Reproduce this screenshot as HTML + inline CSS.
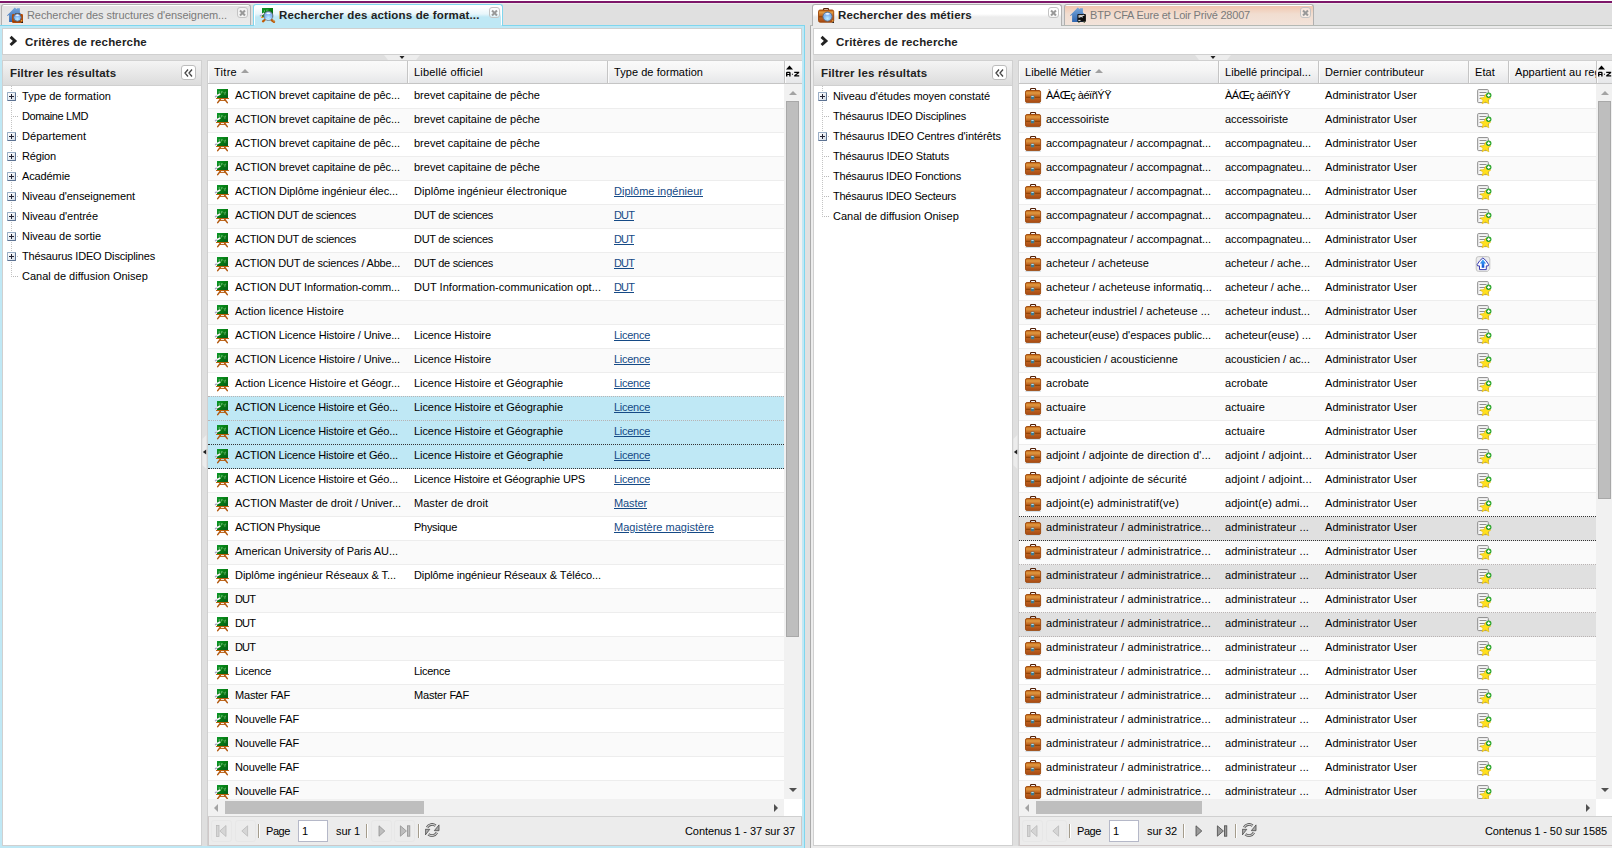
<!DOCTYPE html>
<html lang="fr"><head><meta charset="utf-8"><title>Recherche</title>
<style>
html,body{margin:0;padding:0}
body{width:1612px;height:848px;overflow:hidden;position:relative;background:#e0e0e0;font-family:"Liberation Sans",sans-serif;font-size:11px;color:#000}
.a{position:absolute;box-sizing:border-box}
.ic{position:absolute;display:block;overflow:visible}
.purple{left:0;top:0;width:1612px;height:4px;background:linear-gradient(#fff 0,#fff 1px,#7d1769 1px,#7d1769 3px,#ececec 3px)}
/* tabs */
.tab{border:1px solid #b0b0b0;border-bottom:0;border-radius:3px 3px 0 0}
.tab .tt{position:absolute;top:0;line-height:21px;white-space:nowrap;font-size:11px;color:#7a7a7a}
.tab .tt.b{font-weight:bold;font-size:11.5px;color:#222;letter-spacing:.16px}
.tab-in{background:linear-gradient(#fff 0,#fff 1px,#e4e4e4 1px,#ebebeb 100%)}
.tab-act{border-color:#7fd6ee;background:linear-gradient(#fff 0,#fff 2px,#e8f6fb 9px,#bfe8f5 12px,#bfe8f5 100%);box-shadow:inset 1px 0 0 #fff,inset -1px 0 0 #fff}
.tab-w{border-color:#b0b0b0;background:linear-gradient(#fff 0,#fff 9px,#ececec 12px,#ececec 100%)}
.tab-or{background:linear-gradient(#fff 0,#fff 1px,#f1c7ae 1px,#f1ddd0 9px,#f2e3da 100%)}
.cl{position:absolute;top:2px;width:11px;height:11px;box-sizing:border-box;border:1px solid #c4c4c4;border-radius:3px;background:rgba(255,255,255,.45)}
.cl:before,.cl:after{content:"";position:absolute;left:1px;top:3.5px;width:7px;height:2px;background:#999;transform:rotate(45deg)}
.cl:after{transform:rotate(-45deg)}
/* criteres */
.crit{background:#fff;border:1px solid #d0d0d0}
.ct{position:absolute;left:22px;top:1px;line-height:25px;font-weight:bold;font-size:11.5px;color:#222;white-space:nowrap;letter-spacing:.175px}
/* filter panel */
.fpanel{background:#fff;border:1px solid #d0d0d0}
.fhead{position:relative;height:25px;background:linear-gradient(#f4f4f4,#dcdcdc);border-bottom:1px solid #d0d0d0;box-sizing:border-box}
.ft{position:absolute;left:7px;top:0;line-height:24px;font-weight:bold;font-size:11.5px;color:#222;white-space:nowrap;letter-spacing:.16px}
.coll{position:absolute;right:5px;top:4px;width:15px;height:15px;box-sizing:border-box;border:1px solid #bdbdbd;border-radius:3px;background:#fff}
.coll svg{position:absolute;left:2px;top:2.5px}
.tree{position:relative;padding-top:1px}
.tn{position:relative;height:20px}
.tn.tp{background:linear-gradient(#bcbcbc,#bcbcbc) 14px 9px/1px 1px no-repeat}
.tl{position:absolute;left:19px;top:0;line-height:19px;white-space:nowrap}
.plus{position:absolute;left:4px;top:5px;width:9px;height:9px;box-sizing:border-box;border:1px solid;border-color:#9aaec6 #5c7292 #5c7292 #9aaec6;border-radius:1px;background:linear-gradient(135deg,#fff,#d4dce6)}
.plus:before{content:"";position:absolute;left:1px;top:3px;width:5px;height:1px;background:#223}
.plus:after{content:"";position:absolute;left:3px;top:1px;width:1px;height:5px;background:#223}
.hdot{position:absolute;left:10px;top:9px;width:5px;height:1px;background:repeating-linear-gradient(90deg,#b8b8b8 0,#b8b8b8 1px,transparent 1px,transparent 2px)}
.vdot{position:absolute;left:8px;top:0;width:1px;background:repeating-linear-gradient(#c4c4c4 0,#c4c4c4 1px,transparent 1px,transparent 2px)}
/* grid */
.grid{background:#fff;overflow:hidden}
.ghead{position:absolute;left:0;top:0;right:0;height:24px;box-sizing:border-box;border-top:1px solid #d0d0d0;border-bottom:1px solid #c5c5c5;background:linear-gradient(#fafafa,#f4f4f4 45%,#e6e7e9)}
.hc{position:absolute;top:0;height:22px;box-sizing:border-box;border-right:1px solid #c5c5c5;border-left:1px solid #fbfbfb;overflow:hidden;white-space:nowrap}
.hc span{position:absolute;left:5px;top:0;line-height:22px}
.hc span i{display:inline-block;margin-left:4px;vertical-align:3px;width:0;height:0;border:4px solid transparent;border-top:0;border-bottom:4.5px solid #a0a0a0}
.hc.az{border-right:0}
.hc.az svg{position:absolute;left:0px;top:3.5px}
.gbody{position:absolute;left:0;top:24px;height:715px;box-sizing:border-box;padding-top:1px;overflow:hidden;background:#fff}
.r{position:relative;height:24px;box-sizing:border-box;border-bottom:1px solid #ededed;background:#fff}
.r.alt{background:#fafafa}
.c{position:absolute;top:0;height:23px;overflow:hidden;white-space:nowrap}
.ri{position:absolute;left:6px;top:2px;overflow:visible}
.si{position:absolute;left:8px;top:3px;overflow:visible}
.it{position:absolute;left:27px;top:0;line-height:20px}
.tx{position:absolute;left:6px;top:0;line-height:20px}
.lk{color:#154a86;text-decoration:underline}
.selb{background:#bfe8f5!important;border-bottom:1px dotted #b9b3b3;box-shadow:0 -1px 0 0 #bfe8f5}
.selb:before,.selg:before{content:"";position:absolute;left:0;right:0;top:-1px;height:0;border-top:1px dotted #b9b3b3}
.selg{background:#e0e0e0!important;border-bottom:1px dotted #b9b3b3}
.foc{border-bottom-color:#333!important}
.foc:before{border-top-color:#333!important}
/* scrollbars */
.vsb{position:absolute;top:24px;height:715px;background:#f1f1f1}
.vsb b{position:absolute;left:2px;width:13px;background:#bebebe;box-sizing:border-box;border:1px solid #a8a8a8}
.up,.dn,.lt,.rt{position:absolute;width:0;height:0;border:3.5px solid transparent}
.up{left:4.5px;top:7px;border:4px solid transparent;border-top:0;border-bottom:4px solid #a3a3a3}
.dn{left:4.5px;bottom:7px;border:4px solid transparent;border-bottom:0;border-top:4px solid #505050}
.hsb{position:absolute;left:0;top:739px;height:17px;background:#f1f1f1}
.hsb b{position:absolute;top:2px;height:13px;background:#bebebe;box-sizing:border-box}
.lt{left:6px;top:4.5px;border:4px solid transparent;border-left:0;border-right:4.5px solid #a3a3a3}
.rt{right:6px;top:4.5px;border:4px solid transparent;border-right:0;border-left:4.5px solid #505050}
.corner{position:absolute;top:739px;height:17px;background:#fff}
/* pager */
.pg{position:absolute;left:0;right:0;top:756px;height:30px;box-sizing:border-box;border:1px solid #cfc8c8;border-top-color:#d0d0d0;background:#ececec}
.btn{position:absolute;top:3px;width:21px;height:22px;box-sizing:border-box;border:1px solid transparent;border-radius:3px}
.btn svg{position:absolute;left:2px;top:2px}
.btn.dis{border-color:#e4e4e4;opacity:.55}
.sep{position:absolute;top:7px;width:2px;height:14px;background:linear-gradient(90deg,#a49c8c 0,#a49c8c 1px,#fff 1px)}
.pt{position:absolute;top:0;line-height:28px;white-space:nowrap}
.inp{position:absolute;top:3px;width:30px;height:22px;box-sizing:border-box;border:1px solid #b5b8c8;background:#fff;line-height:20px;padding-left:3px;font-size:11px}
.info{position:absolute;right:6px;top:0;line-height:28px;white-space:nowrap}

</style></head>
<body>
<svg width="0" height="0" style="position:absolute">
<defs>
<linearGradient id="gGreen" x1="0" y1="0" x2="1" y2="1"><stop offset="0" stop-color="#0a9a2a"/><stop offset=".5" stop-color="#067a10"/><stop offset="1" stop-color="#035a1c"/></linearGradient>
<linearGradient id="gCase" x1="0" y1="0" x2="0" y2="1"><stop offset="0" stop-color="#c2610f"/><stop offset=".2" stop-color="#e09a42"/><stop offset=".45" stop-color="#c46a22"/><stop offset="1" stop-color="#a84a14"/></linearGradient>
<radialGradient id="gLens" cx=".5" cy=".7" r=".7"><stop offset="0" stop-color="#b8ecff"/><stop offset=".6" stop-color="#7fb2f2"/><stop offset="1" stop-color="#8fb8f0"/></radialGradient>
<linearGradient id="gHouse" x1="0" y1="0" x2="0" y2="1"><stop offset="0" stop-color="#78a8dc"/><stop offset="1" stop-color="#2f66b0"/></linearGradient>
<linearGradient id="gArrow" x1="0" y1="0" x2="0" y2="1"><stop offset="0" stop-color="#4ab4ff"/><stop offset="1" stop-color="#0a4ad0"/></linearGradient>
<symbol overflow="visible" id="i-board" viewBox="0 0 16 16">
 <rect x="3" y="2" width="11" height="9" fill="url(#gGreen)"/>
 <rect x="2" y="10.9" width="13" height="1.2" rx=".4" fill="#be620e"/>
 <path d="M6.3 12.3 L3.7 15.6 M10.7 12.3 L13.3 15.6" stroke="#b2560a" stroke-width="1.5" stroke-linecap="round"/>
 <path d="M6 13.4 H11" stroke="#b85a0a" stroke-width="1"/>
 <path d="M5.2 4 v2.6 M7.4 4.2 v2.2 M8.2 4.6 l1.2 .9 M10.9 5.2 v2.6 M11 5.2 h.9" stroke="#9fdc9f" stroke-width=".8" opacity=".75"/>
 <path d="M1.9 9.2 L5.8 7.2" stroke="#f8f4fb" stroke-width="1.6" stroke-linecap="round"/>
 <path d="M1.5 9.6 L2.3 9.2" stroke="#a8a0c4" stroke-width="1.5" stroke-linecap="round"/>
</symbol>
<symbol overflow="visible" id="i-case" viewBox="0 0 16 16">
 <path d="M5.5 3.8 V2.4 Q5.5 1.5 6.4 1.5 H9.7 Q10.6 1.5 10.6 2.4 V3.8" fill="none" stroke="#521e04" stroke-width="1.15"/>
 <rect x=".5" y="3.5" width="15.1" height="12" rx="1.6" fill="url(#gCase)" stroke="#9a4408" stroke-width=".9"/>
 <path d="M1 10.3 H15.2" stroke="#8a4208" stroke-width="1.1"/>
 <rect x="5.3" y="8.2" width="4.4" height="4.6" rx=".9" fill="#b8621c"/>
 <rect x="5.9" y="8.8" width="3.3" height="3.5" rx=".5" fill="#3f7890"/>
 <rect x="6.4" y="8.9" width="2.3" height="1" fill="#c4e8f0"/>
 <path d="M.4 16.4 H15.8" stroke="#c4d0da" stroke-width=".8"/>
</symbol>
<symbol overflow="visible" id="i-state" viewBox="0 0 16 16">
 <rect x=".7" y="1.6" width="10.6" height="13" rx=".8" fill="#f6f6f6" stroke="#8a8a8a" stroke-width="1"/>
 <path d="M2.5 4.5 H9.5 M2.5 7.5 H9.5 M2.5 10.5 H5" stroke="#8e8e8e" stroke-width="1"/>
 <path d="M8.5 6.2 L10 9.5 L13.8 9.9 L11 12.3 L11.9 15.8 L8.5 13.9 L5.1 15.8 L6 12.3 L3.2 9.9 L7 9.5 Z" fill="#ffe01e" stroke="#e4b90a" stroke-width=".6"/>
 <circle cx="11.7" cy="7.3" r="2.7" fill="#27a327"/>
 <path d="M10.2 7.3 H13.2 M11.7 5.8 V8.8" stroke="#fff" stroke-width="1.2"/>
</symbol>
<symbol overflow="visible" id="i-pub" viewBox="0 0 16 16">
 <path d="M1.6 .6 H10.4 Q12.8 .6 12.8 3 V13 L10.4 15.4 H1.6 Q-.8 15.4 -.8 13 V3 Q-.8 .6 1.6 .6 Z" fill="#ececec" stroke="#c4c4c4" stroke-width="1"/>
 <path d="M5.9 1.9 Q9.4 4.2 11.7 8.7 L11.2 9.9 H9.3 V13.6 H2.5 V9.9 H.6 L.1 8.7 Q2.4 4.2 5.9 1.9 Z" fill="#fff" stroke="#3c3eb2" stroke-width="1" stroke-linejoin="round"/>
 <path d="M5.9 3.3 L9 7.5 H7.3 V11.8 H4.7 V7.5 H2.9 Z" fill="url(#gArrow)"/>
</symbol>
<symbol overflow="visible" id="lens" viewBox="0 0 16 16">
 <circle cx="8" cy="8" r="4.3" fill="url(#gLens)" stroke="#5a6068" stroke-width=".9"/>
 <ellipse cx="8" cy="5.7" rx="2" ry=".8" fill="#fff" opacity=".9"/>
</symbol>
<symbol overflow="visible" id="i-house-search" viewBox="0 0 16 16">
 <path d="M0 8.5 L7.8 .4 L9.4 2 L10.2 1.2 H12.9 V5.4 L14.4 6.9 V7.6 H13.2 V14.9 H2.1 V7.6 L.9 8.9 Z" fill="url(#gHouse)"/>
 <rect x="5" y="7" width="11" height="9" rx="1.2" fill="#b24a06"/>
 <path d="M5.4 14.6 H15.6" stroke="#9a3c04" stroke-width="1"/>
 <path d="M8.2 6.6 H12.9" stroke="#4a4a4a" stroke-width="1"/>
 <circle cx="10.4" cy="10.5" r="3.8" fill="url(#gLens)" stroke="#5c6068" stroke-width=".9"/>
 <ellipse cx="10.4" cy="8.3" rx="1.7" ry=".7" fill="#fff" opacity=".85"/>
 <path d="M14.6 13.2 V14.6" stroke="#ffc040" stroke-width="1"/>
 <rect x="14.4" y="14.8" width="1.6" height="1.2" fill="#1a1a1a"/>
</symbol>
<symbol overflow="visible" id="i-board-search" viewBox="0 0 16 16">
 <rect x="2" y="1" width="11" height="9" fill="url(#gGreen)"/>
 <path d="M4.4 3 v2.2 M6.8 2.6 v1.4 M7.4 3 h1" stroke="#9fdc9f" stroke-width=".8" opacity=".7"/>
 <path d="M.6 8.6 L3.6 6.4" stroke="#f2e6f6" stroke-width="1.5" stroke-linecap="round"/>
 <path d="M.4 8.9 L1.2 8.4" stroke="#b0a8c8" stroke-width="1.5" stroke-linecap="round"/>
 <path d="M1.2 10.3 H3.4" stroke="#f08c14" stroke-width="1.3"/>
 <path d="M4.6 13 L3 14.4" stroke="#c05c08" stroke-width="2.2" stroke-linecap="round"/>
 <path d="M11.6 13 L14 14.8" stroke="#b85808" stroke-width="2.4" stroke-linecap="round"/>
 <path d="M13 13.4 L14.2 14.4" stroke="#e8b060" stroke-width=".9" stroke-linecap="round"/>
 <circle cx="8.4" cy="8.9" r="4.5" fill="url(#gLens)" stroke="#6a7078" stroke-width=".9"/>
 <ellipse cx="8.4" cy="6.4" rx="2.1" ry=".8" fill="#fff" opacity=".9"/>
 <path d="M5.6 11.6 Q8.4 13.6 11.2 11.6" fill="none" stroke="#e8fbff" stroke-width=".9" opacity=".8"/>
</symbol>
<symbol overflow="visible" id="i-case-search" viewBox="0 0 16 16">
 <path d="M5.5 3.3 V2.4 Q5.5 1.5 6.4 1.5 H9.7 Q10.6 1.5 10.6 2.4 V3.3" fill="none" stroke="#521e04" stroke-width="1.15"/>
 <rect x=".5" y="3" width="15.2" height="12.2" rx="1.6" fill="url(#gCase)" stroke="#9a4408" stroke-width=".9"/>
 <path d="M1 9.8 H6" stroke="#8a4208" stroke-width="1.1"/>
 <circle cx="9.5" cy="9.6" r="4.6" fill="url(#gLens)" stroke="#5a6a7a" stroke-width=".9"/>
 <ellipse cx="9.5" cy="6.9" rx="2.1" ry=".8" fill="#fff" opacity=".9"/>
 <path d="M14.6 13.4 V14.6" stroke="#ffc84a" stroke-width="1"/>
 <rect x="14.4" y="14.8" width="1.6" height="1.2" fill="#222"/>
</symbol>
<symbol overflow="visible" id="i-house-bus" viewBox="0 0 16 16">
 <path d="M0 8.5 L7.8 .4 L9.4 2 L10.2 1.2 H12.9 V5.4 L14.4 6.9 V7.6 H13.2 V14.9 H2.1 V7.6 L.9 8.9 Z" fill="url(#gHouse)"/>
 <rect x="7.4" y="7" width="8.5" height="7.8" rx=".9" fill="#0c0c0c"/>
 <path d="M8.4 8.4 H14.4 M8.4 9.6 H12.6 M8.6 10.6 L13.8 8.2 M10.4 8.2 L12.4 10.6" stroke="#dcdcdc" stroke-width=".9"/>
 <rect x="8.3" y="12.9" width="2.2" height=".9" fill="#fff"/>
 <path d="M8.2 15.2 H9.6 M13.6 15.2 H15" stroke="#24401a" stroke-width=".9"/>
</symbol>
<symbol overflow="visible" id="p-first" viewBox="0 0 16 16"><rect x="2.6" y="2.5" width="2.4" height="11" fill="#c4c4c4" stroke="#8a8a8a" stroke-width=".7"/><path d="M12 2.5 V13.5 L5.8 8 Z" fill="#c4c4c4" stroke="#8a8a8a" stroke-width=".7"/></symbol>
<symbol overflow="visible" id="p-prev" viewBox="0 0 16 16"><path d="M9.6 2.8 V13.2 L3.8 8 Z" fill="#c4c4c4" stroke="#8a8a8a" stroke-width=".7"/></symbol>
<symbol overflow="visible" id="p-next" viewBox="0 0 16 16"><path d="M5 2.8 V13.2 L10.8 8 Z" fill="#9a9a9a" stroke="#4a4a4a" stroke-width=".8"/></symbol>
<symbol overflow="visible" id="p-last" viewBox="0 0 16 16"><rect x="10.4" y="2.8" width="2.4" height="10.4" fill="#9a9a9a" stroke="#4a4a4a" stroke-width=".8"/><path d="M3.4 2.8 V13.2 L9.4 8 Z" fill="#9a9a9a" stroke="#4a4a4a" stroke-width=".8"/></symbol>
<symbol overflow="visible" id="p-refresh" viewBox="0 0 16 16">
 <path d="M2.15 4.4 A5.6 5.6 0 0 1 10.6 2.7" fill="none" stroke="#5a5a5a" stroke-width="2.7"/>
 <path d="M2.15 4.4 A5.6 5.6 0 0 1 10.6 2.7" fill="none" stroke="#cfcfcf" stroke-width="1.1"/>
 <path d="M14 1.9 V7.7 H9.3 Z" fill="#a8a8a8" stroke="#4c4c4c" stroke-width=".8" stroke-linejoin="round"/>
 <path d="M11.85 9.7 A5.6 5.6 0 0 1 3.4 11.3" fill="none" stroke="#5a5a5a" stroke-width="2.7"/>
 <path d="M11.85 9.7 A5.6 5.6 0 0 1 3.4 11.3" fill="none" stroke="#cfcfcf" stroke-width="1.1"/>
 <path d="M.3 6.3 H4.8 L.3 12 Z" fill="#a8a8a8" stroke="#4c4c4c" stroke-width=".8" stroke-linejoin="round"/>
</symbol>
</defs>
</svg>
<div class="a purple"></div><div class="a tab tab-in" style="left:1px;top:4px;width:250px;height:21px"><svg class="ic" style="left:5px;top:2px" width="16" height="16" ><use href="#i-house-search"/></svg><span class="tt" style="left:25px;letter-spacing:-0.082px">Rechercher des structures d'enseignem...</span><span class="cl" style="left:235px"></span></div><div class="a tab tab-act" style="left:253px;top:4px;width:250px;height:22px"><svg class="ic" style="left:6px;top:2px" width="16" height="16" ><use href="#i-board-search"/></svg><span class="tt b" style="left:25px">Rechercher des actions de format...</span><span class="cl" style="left:235px"></span></div><div class="a" style="left:-1px;top:25px;width:806px;height:824px;border:1px solid #7fd6ee;box-sizing:border-box;background:#bfe8f5"></div><div class="a" style="left:2px;top:28px;width:800px;height:818px;background:#dfdfdf"></div><div class="a" style="left:254px;top:25px;width:248px;height:3px;background:#bfe8f5"></div><div class="a crit" style="left:2px;top:28px;width:800px;height:27px"><svg class="ic" style="left:6px;top:7px" width="10" height="12" viewBox="0 0 10 12"><path d="M2.6 1.8 L6 4.9 L2.6 8" fill="none" stroke="#222" stroke-width="2.9" stroke-linecap="square" stroke-linejoin="miter"/></svg><span class="ct">Critères de recherche</span></div><svg class="ic" style="left:384px;top:55px" width="36" height="5" viewBox="0 0 36 5"><path d="M0 0 L36 0 L32 5 L4 5 Z" fill="#ededed"/><path d="M15.5 1 L20.5 1 L18 4 Z" fill="#222"/></svg><div class="a fpanel" style="left:2px;top:60px;width:200px;height:786px"><div class="fhead"><span class="ft">Filtrer les résultats</span><span class="coll"><svg width="9" height="8" viewBox="0 0 9 8"><path d="M4 0.5 L1 4 L4 7.5 M8 0.5 L5 4 L8 7.5" fill="none" stroke="#444" stroke-width="1.3"/></svg></span></div><div class="tree"><div class="vdot" style="height:192px"></div><div class="tn tp"><span class="plus"></span><span class="tl" style="letter-spacing:0.055px">Type de formation</span></div><div class="tn"><span class="hdot"></span><span class="tl" style="letter-spacing:-0.392px">Domaine LMD</span></div><div class="tn tp"><span class="plus"></span><span class="tl" style="letter-spacing:0.037px">Département</span></div><div class="tn tp"><span class="plus"></span><span class="tl" style="letter-spacing:-0.143px">Région</span></div><div class="tn tp"><span class="plus"></span><span class="tl" style="letter-spacing:-0.115px">Académie</span></div><div class="tn tp"><span class="plus"></span><span class="tl" style="letter-spacing:-0.077px">Niveau d'enseignement</span></div><div class="tn tp"><span class="plus"></span><span class="tl" style="letter-spacing:-0.048px">Niveau d'entrée</span></div><div class="tn tp"><span class="plus"></span><span class="tl" style="letter-spacing:-0.031px">Niveau de sortie</span></div><div class="tn tp"><span class="plus"></span><span class="tl" style="letter-spacing:-0.175px">Thésaurus IDEO Disciplines</span></div><div class="tn"><span class="hdot"></span><span class="tl">Canal de diffusion Onisep</span></div></div></div><svg class="ic" style="left:201px;top:435.4px" width="7" height="34" viewBox="0 0 7 34"><path d="M5.3 0 L5.3 34 L1.4 30 L1.4 4 Z" fill="#ececec"/><path d="M5.2 14.6 L5.2 19.4 L1.9 17 Z" fill="#222"/></svg><div class="a" style="left:207px;top:60px;width:1px;height:786px;background:#d0d0d0"></div><div class="a grid" style="left:208px;top:60px;width:594px;height:786px"><div class="ghead"><div class="hc" style="left:0px;width:200px"><span style="letter-spacing:0.281px">Titre<i></i></span></div><div class="hc" style="left:200px;width:200px"><span style="letter-spacing:0.197px">Libellé officiel</span></div><div class="hc" style="left:400px;width:177px"><span style="letter-spacing:0.055px">Type de formation</span></div><div class="hc az" style="left:577px;width:17px"><svg width="15" height="13" viewBox="0 0 15 13"><path d="M0 4.4 L3.5 0.4 L7 4.4 Z" fill="#000"/><path fill-rule="evenodd" d="M0 11.4 V7.9 Q0 6.8 1.1 6.8 H3.5 Q4.6 6.8 4.6 7.9 V11.4 H3.2 V10.1 H1.4 V11.4 Z M1.4 7.9 V9 H3.2 V7.9 Z M5.9 8.7 H6.9 V9.7 H5.9 Z M8.2 6.8 H13.2 V7.9 L10.2 10.2 H13.2 V11.4 H8.2 V10.2 L11.2 7.9 H8.2 Z" fill="#000"/></svg></div></div><div class="gbody" style="width:576px"><div class="r"><div class="c" style="left:0px;width:200px"><svg class="ri" width="16" height="16"><use href="#i-board"/></svg><span class="it" style="letter-spacing:-0.077px">ACTION brevet capitaine de pêc...</span></div><div class="c" style="left:200px;width:200px"><span class="tx">brevet capitaine de pêche</span></div><div class="c" style="left:400px;width:177px"></div></div><div class="r alt"><div class="c" style="left:0px;width:200px"><svg class="ri" width="16" height="16"><use href="#i-board"/></svg><span class="it" style="letter-spacing:-0.077px">ACTION brevet capitaine de pêc...</span></div><div class="c" style="left:200px;width:200px"><span class="tx">brevet capitaine de pêche</span></div><div class="c" style="left:400px;width:177px"></div></div><div class="r"><div class="c" style="left:0px;width:200px"><svg class="ri" width="16" height="16"><use href="#i-board"/></svg><span class="it" style="letter-spacing:-0.077px">ACTION brevet capitaine de pêc...</span></div><div class="c" style="left:200px;width:200px"><span class="tx">brevet capitaine de pêche</span></div><div class="c" style="left:400px;width:177px"></div></div><div class="r alt"><div class="c" style="left:0px;width:200px"><svg class="ri" width="16" height="16"><use href="#i-board"/></svg><span class="it" style="letter-spacing:-0.077px">ACTION brevet capitaine de pêc...</span></div><div class="c" style="left:200px;width:200px"><span class="tx">brevet capitaine de pêche</span></div><div class="c" style="left:400px;width:177px"></div></div><div class="r"><div class="c" style="left:0px;width:200px"><svg class="ri" width="16" height="16"><use href="#i-board"/></svg><span class="it" style="letter-spacing:-0.084px">ACTION Diplôme ingénieur élec...</span></div><div class="c" style="left:200px;width:200px"><span class="tx" style="letter-spacing:0.045px">Diplôme ingénieur électronique</span></div><div class="c" style="left:400px;width:177px"><span class="tx lk" style="letter-spacing:0.019px">Diplôme ingénieur</span></div></div><div class="r alt"><div class="c" style="left:0px;width:200px"><svg class="ri" width="16" height="16"><use href="#i-board"/></svg><span class="it" style="letter-spacing:-0.326px">ACTION DUT de sciences</span></div><div class="c" style="left:200px;width:200px"><span class="tx" style="letter-spacing:-0.304px">DUT de sciences</span></div><div class="c" style="left:400px;width:177px"><span class="tx lk" style="letter-spacing:-0.870px">DUT</span></div></div><div class="r"><div class="c" style="left:0px;width:200px"><svg class="ri" width="16" height="16"><use href="#i-board"/></svg><span class="it" style="letter-spacing:-0.326px">ACTION DUT de sciences</span></div><div class="c" style="left:200px;width:200px"><span class="tx" style="letter-spacing:-0.304px">DUT de sciences</span></div><div class="c" style="left:400px;width:177px"><span class="tx lk" style="letter-spacing:-0.870px">DUT</span></div></div><div class="r alt"><div class="c" style="left:0px;width:200px"><svg class="ri" width="16" height="16"><use href="#i-board"/></svg><span class="it" style="letter-spacing:-0.206px">ACTION DUT de sciences / Abbe...</span></div><div class="c" style="left:200px;width:200px"><span class="tx" style="letter-spacing:-0.304px">DUT de sciences</span></div><div class="c" style="left:400px;width:177px"><span class="tx lk" style="letter-spacing:-0.870px">DUT</span></div></div><div class="r"><div class="c" style="left:0px;width:200px"><svg class="ri" width="16" height="16"><use href="#i-board"/></svg><span class="it" style="letter-spacing:-0.096px">ACTION DUT Information-comm...</span></div><div class="c" style="left:200px;width:200px"><span class="tx" style="letter-spacing:0.037px">DUT Information-communication opt...</span></div><div class="c" style="left:400px;width:177px"><span class="tx lk" style="letter-spacing:-0.870px">DUT</span></div></div><div class="r alt"><div class="c" style="left:0px;width:200px"><svg class="ri" width="16" height="16"><use href="#i-board"/></svg><span class="it" style="letter-spacing:0.034px">Action licence Histoire</span></div><div class="c" style="left:200px;width:200px"></div><div class="c" style="left:400px;width:177px"></div></div><div class="r"><div class="c" style="left:0px;width:200px"><svg class="ri" width="16" height="16"><use href="#i-board"/></svg><span class="it" style="letter-spacing:-0.128px">ACTION Licence Histoire / Unive...</span></div><div class="c" style="left:200px;width:200px"><span class="tx" style="letter-spacing:-0.079px">Licence Histoire</span></div><div class="c" style="left:400px;width:177px"><span class="tx lk" style="letter-spacing:-0.275px">Licence</span></div></div><div class="r alt"><div class="c" style="left:0px;width:200px"><svg class="ri" width="16" height="16"><use href="#i-board"/></svg><span class="it" style="letter-spacing:-0.128px">ACTION Licence Histoire / Unive...</span></div><div class="c" style="left:200px;width:200px"><span class="tx" style="letter-spacing:-0.079px">Licence Histoire</span></div><div class="c" style="left:400px;width:177px"><span class="tx lk" style="letter-spacing:-0.275px">Licence</span></div></div><div class="r"><div class="c" style="left:0px;width:200px"><svg class="ri" width="16" height="16"><use href="#i-board"/></svg><span class="it" style="letter-spacing:-0.037px">Action Licence Histoire et Géogr...</span></div><div class="c" style="left:200px;width:200px"><span class="tx" style="letter-spacing:-0.068px">Licence Histoire et Géographie</span></div><div class="c" style="left:400px;width:177px"><span class="tx lk" style="letter-spacing:-0.275px">Licence</span></div></div><div class="r alt selb"><div class="c" style="left:0px;width:200px"><svg class="ri" width="16" height="16"><use href="#i-board"/></svg><span class="it" style="letter-spacing:-0.155px">ACTION Licence Histoire et Géo...</span></div><div class="c" style="left:200px;width:200px"><span class="tx" style="letter-spacing:-0.068px">Licence Histoire et Géographie</span></div><div class="c" style="left:400px;width:177px"><span class="tx lk" style="letter-spacing:-0.275px">Licence</span></div></div><div class="r selb"><div class="c" style="left:0px;width:200px"><svg class="ri" width="16" height="16"><use href="#i-board"/></svg><span class="it" style="letter-spacing:-0.155px">ACTION Licence Histoire et Géo...</span></div><div class="c" style="left:200px;width:200px"><span class="tx" style="letter-spacing:-0.068px">Licence Histoire et Géographie</span></div><div class="c" style="left:400px;width:177px"><span class="tx lk" style="letter-spacing:-0.275px">Licence</span></div></div><div class="r alt selb foc"><div class="c" style="left:0px;width:200px"><svg class="ri" width="16" height="16"><use href="#i-board"/></svg><span class="it" style="letter-spacing:-0.155px">ACTION Licence Histoire et Géo...</span></div><div class="c" style="left:200px;width:200px"><span class="tx" style="letter-spacing:-0.068px">Licence Histoire et Géographie</span></div><div class="c" style="left:400px;width:177px"><span class="tx lk" style="letter-spacing:-0.275px">Licence</span></div></div><div class="r"><div class="c" style="left:0px;width:200px"><svg class="ri" width="16" height="16"><use href="#i-board"/></svg><span class="it" style="letter-spacing:-0.155px">ACTION Licence Histoire et Géo...</span></div><div class="c" style="left:200px;width:200px"><span class="tx" style="letter-spacing:-0.168px">Licence Histoire et Géographie UPS</span></div><div class="c" style="left:400px;width:177px"><span class="tx lk" style="letter-spacing:-0.275px">Licence</span></div></div><div class="r alt"><div class="c" style="left:0px;width:200px"><svg class="ri" width="16" height="16"><use href="#i-board"/></svg><span class="it" style="letter-spacing:-0.044px">ACTION Master de droit / Univer...</span></div><div class="c" style="left:200px;width:200px"><span class="tx" style="letter-spacing:0.042px">Master de droit</span></div><div class="c" style="left:400px;width:177px"><span class="tx lk" style="letter-spacing:-0.104px">Master</span></div></div><div class="r"><div class="c" style="left:0px;width:200px"><svg class="ri" width="16" height="16"><use href="#i-board"/></svg><span class="it" style="letter-spacing:-0.325px">ACTION Physique</span></div><div class="c" style="left:200px;width:200px"><span class="tx" style="letter-spacing:-0.283px">Physique</span></div><div class="c" style="left:400px;width:177px"><span class="tx lk" style="letter-spacing:0.018px">Magistère magistère</span></div></div><div class="r alt"><div class="c" style="left:0px;width:200px"><svg class="ri" width="16" height="16"><use href="#i-board"/></svg><span class="it" style="letter-spacing:-0.061px">American University of Paris AU...</span></div><div class="c" style="left:200px;width:200px"></div><div class="c" style="left:400px;width:177px"></div></div><div class="r"><div class="c" style="left:0px;width:200px"><svg class="ri" width="16" height="16"><use href="#i-board"/></svg><span class="it" style="letter-spacing:-0.064px">Diplôme ingénieur Réseaux &amp; T...</span></div><div class="c" style="left:200px;width:200px"><span class="tx" style="letter-spacing:-0.097px">Diplôme ingénieur Réseaux &amp; Téléco...</span></div><div class="c" style="left:400px;width:177px"></div></div><div class="r alt"><div class="c" style="left:0px;width:200px"><svg class="ri" width="16" height="16"><use href="#i-board"/></svg><span class="it" style="letter-spacing:-0.870px">DUT</span></div><div class="c" style="left:200px;width:200px"></div><div class="c" style="left:400px;width:177px"></div></div><div class="r"><div class="c" style="left:0px;width:200px"><svg class="ri" width="16" height="16"><use href="#i-board"/></svg><span class="it" style="letter-spacing:-0.870px">DUT</span></div><div class="c" style="left:200px;width:200px"></div><div class="c" style="left:400px;width:177px"></div></div><div class="r alt"><div class="c" style="left:0px;width:200px"><svg class="ri" width="16" height="16"><use href="#i-board"/></svg><span class="it" style="letter-spacing:-0.870px">DUT</span></div><div class="c" style="left:200px;width:200px"></div><div class="c" style="left:400px;width:177px"></div></div><div class="r"><div class="c" style="left:0px;width:200px"><svg class="ri" width="16" height="16"><use href="#i-board"/></svg><span class="it" style="letter-spacing:-0.275px">Licence</span></div><div class="c" style="left:200px;width:200px"><span class="tx" style="letter-spacing:-0.275px">Licence</span></div><div class="c" style="left:400px;width:177px"></div></div><div class="r alt"><div class="c" style="left:0px;width:200px"><svg class="ri" width="16" height="16"><use href="#i-board"/></svg><span class="it" style="letter-spacing:-0.184px">Master FAF</span></div><div class="c" style="left:200px;width:200px"><span class="tx" style="letter-spacing:-0.184px">Master FAF</span></div><div class="c" style="left:400px;width:177px"></div></div><div class="r"><div class="c" style="left:0px;width:200px"><svg class="ri" width="16" height="16"><use href="#i-board"/></svg><span class="it" style="letter-spacing:-0.169px">Nouvelle FAF</span></div><div class="c" style="left:200px;width:200px"></div><div class="c" style="left:400px;width:177px"></div></div><div class="r alt"><div class="c" style="left:0px;width:200px"><svg class="ri" width="16" height="16"><use href="#i-board"/></svg><span class="it" style="letter-spacing:-0.169px">Nouvelle FAF</span></div><div class="c" style="left:200px;width:200px"></div><div class="c" style="left:400px;width:177px"></div></div><div class="r"><div class="c" style="left:0px;width:200px"><svg class="ri" width="16" height="16"><use href="#i-board"/></svg><span class="it" style="letter-spacing:-0.169px">Nouvelle FAF</span></div><div class="c" style="left:200px;width:200px"></div><div class="c" style="left:400px;width:177px"></div></div><div class="r alt"><div class="c" style="left:0px;width:200px"><svg class="ri" width="16" height="16"><use href="#i-board"/></svg><span class="it" style="letter-spacing:-0.169px">Nouvelle FAF</span></div><div class="c" style="left:200px;width:200px"></div><div class="c" style="left:400px;width:177px"></div></div></div><div class="vsb" style="left:576px;width:18px"><i class="up"></i><i class="dn"></i><b style="top:17px;height:536px"></b></div><div class="hsb" style="width:576px"><i class="lt"></i><i class="rt"></i><b style="left:17px;width:199px"></b></div><div class="corner" style="left:576px;width:18px"></div><div class="pg"><span class="btn dis" style="left:2px"><svg width="16" height="16"><use href="#p-first"/></svg></span><span class="btn dis" style="left:26px"><svg width="16" height="16"><use href="#p-prev"/></svg></span><i class="sep" style="left:49px"></i><span class="pt" style="left:57px;letter-spacing:-0.426px">Page</span><span class="inp" style="left:89px">1</span><span class="pt" style="left:127px;letter-spacing:-0.094px">sur 1</span><i class="sep" style="left:157px"></i><span class="btn dis" style="left:162px"><svg width="16" height="16"><use href="#p-next"/></svg></span><span class="btn dis" style="left:185px"><svg width="16" height="16"><use href="#p-last"/></svg></span><i class="sep" style="left:209px"></i><span class="btn" style="left:213px"><svg width="16" height="16"><use href="#p-refresh"/></svg></span><span class="info" style="letter-spacing:-0.087px">Contenus 1 - 37 sur 37</span></div></div><div class="a" style="left:810px;top:25px;width:802px;height:1px;background:#b4b8b4"></div><div class="a" style="left:810px;top:26px;width:1px;height:822px;background:#aaa"></div><div class="a" style="left:811px;top:26px;width:801px;height:822px;background:#ececec"></div><div class="a" style="left:813px;top:55px;width:799px;height:5px;background:#dfdfdf"></div><div class="a tab tab-w" style="left:812px;top:4px;width:250px;height:22px"><svg class="ic" style="left:5px;top:2px" width="16" height="16" ><use href="#i-case-search"/></svg><span class="tt b" style="left:25px">Rechercher des métiers</span><span class="cl" style="left:235px"></span></div><div class="a tab tab-or" style="left:1064px;top:4px;width:250px;height:21px"><svg class="ic" style="left:5px;top:2px" width="16" height="16" ><use href="#i-house-bus"/></svg><span class="tt" style="left:25px;letter-spacing:-0.210px">BTP CFA Eure et Loir Privé 28007</span><span class="cl" style="left:235px"></span></div><div class="a crit" style="left:813px;top:28px;width:810px;height:27px"><svg class="ic" style="left:6px;top:7px" width="10" height="12" viewBox="0 0 10 12"><path d="M2.6 1.8 L6 4.9 L2.6 8" fill="none" stroke="#222" stroke-width="2.9" stroke-linecap="square" stroke-linejoin="miter"/></svg><span class="ct">Critères de recherche</span></div><svg class="ic" style="left:1195px;top:55px" width="36" height="5" viewBox="0 0 36 5"><path d="M0 0 L36 0 L32 5 L4 5 Z" fill="#ededed"/><path d="M15.5 1 L20.5 1 L18 4 Z" fill="#222"/></svg><div class="a fpanel" style="left:813px;top:60px;width:200px;height:786px"><div class="fhead"><span class="ft">Filtrer les résultats</span><span class="coll"><svg width="9" height="8" viewBox="0 0 9 8"><path d="M4 0.5 L1 4 L4 7.5 M8 0.5 L5 4 L8 7.5" fill="none" stroke="#444" stroke-width="1.3"/></svg></span></div><div class="tree"><div class="vdot" style="height:132px"></div><div class="tn tp"><span class="plus"></span><span class="tl" style="letter-spacing:-0.076px">Niveau d'études moyen constaté</span></div><div class="tn"><span class="hdot"></span><span class="tl" style="letter-spacing:-0.175px">Thésaurus IDEO Disciplines</span></div><div class="tn tp"><span class="plus"></span><span class="tl" style="letter-spacing:-0.086px">Thésaurus IDEO Centres d'intérêts</span></div><div class="tn"><span class="hdot"></span><span class="tl" style="letter-spacing:-0.146px">Thésaurus IDEO Statuts</span></div><div class="tn"><span class="hdot"></span><span class="tl" style="letter-spacing:-0.195px">Thésaurus IDEO Fonctions</span></div><div class="tn"><span class="hdot"></span><span class="tl" style="letter-spacing:-0.234px">Thésaurus IDEO Secteurs</span></div><div class="tn"><span class="hdot"></span><span class="tl">Canal de diffusion Onisep</span></div></div></div><div class="a" style="left:1013px;top:60px;width:6px;height:786px;background:#dfdfdf"></div><svg class="ic" style="left:1012px;top:435.4px" width="7" height="34" viewBox="0 0 7 34"><path d="M5.3 0 L5.3 34 L1.4 30 L1.4 4 Z" fill="#ececec"/><path d="M5.2 14.6 L5.2 19.4 L1.9 17 Z" fill="#222"/></svg><div class="a" style="left:1018px;top:60px;width:1px;height:786px;background:#d0d0d0"></div><div class="a grid" style="left:1019px;top:60px;width:595px;height:786px"><div class="ghead"><div class="hc" style="left:0px;width:200px"><span style="letter-spacing:0.041px">Libellé Métier<i></i></span></div><div class="hc" style="left:200px;width:100px"><span style="letter-spacing:0.050px">Libellé principal...</span></div><div class="hc" style="left:300px;width:150px"><span style="letter-spacing:0.089px">Dernier contributeur</span></div><div class="hc" style="left:450px;width:40px"><span style="letter-spacing:0.105px">Etat</span></div><div class="hc" style="left:490px;width:88px"><span style="letter-spacing:0.078px">Appartient au regroupement</span></div><div class="hc az" style="left:578px;width:17px"><svg width="15" height="13" viewBox="0 0 15 13"><path d="M0 4.4 L3.5 0.4 L7 4.4 Z" fill="#000"/><path fill-rule="evenodd" d="M0 11.4 V7.9 Q0 6.8 1.1 6.8 H3.5 Q4.6 6.8 4.6 7.9 V11.4 H3.2 V10.1 H1.4 V11.4 Z M1.4 7.9 V9 H3.2 V7.9 Z M5.9 8.7 H6.9 V9.7 H5.9 Z M8.2 6.8 H13.2 V7.9 L10.2 10.2 H13.2 V11.4 H8.2 V10.2 L11.2 7.9 H8.2 Z" fill="#000"/></svg></div></div><div class="gbody" style="width:577px"><div class="r"><div class="c" style="left:0px;width:200px"><svg class="ri" width="16" height="16"><use href="#i-case"/></svg><span class="it" style="letter-spacing:-0.484px">ÀÁŒç àéïñÝŸ</span></div><div class="c" style="left:200px;width:100px"><span class="tx" style="letter-spacing:-0.484px">ÀÁŒç àéïñÝŸ</span></div><div class="c" style="left:300px;width:150px"><span class="tx" style="letter-spacing:0.051px">Administrator User</span></div><div class="c" style="left:450px;width:40px"><svg class="si" width="16" height="16"><use href="#i-state"/></svg></div><div class="c" style="left:490px;width:88px"></div></div><div class="r alt"><div class="c" style="left:0px;width:200px"><svg class="ri" width="16" height="16"><use href="#i-case"/></svg><span class="it" style="letter-spacing:-0.044px">accessoiriste</span></div><div class="c" style="left:200px;width:100px"><span class="tx" style="letter-spacing:-0.044px">accessoiriste</span></div><div class="c" style="left:300px;width:150px"><span class="tx" style="letter-spacing:0.051px">Administrator User</span></div><div class="c" style="left:450px;width:40px"><svg class="si" width="16" height="16"><use href="#i-state"/></svg></div><div class="c" style="left:490px;width:88px"></div></div><div class="r"><div class="c" style="left:0px;width:200px"><svg class="ri" width="16" height="16"><use href="#i-case"/></svg><span class="it" style="letter-spacing:-0.043px">accompagnateur / accompagnat...</span></div><div class="c" style="left:200px;width:100px"><span class="tx" style="letter-spacing:-0.091px">accompagnateu...</span></div><div class="c" style="left:300px;width:150px"><span class="tx" style="letter-spacing:0.051px">Administrator User</span></div><div class="c" style="left:450px;width:40px"><svg class="si" width="16" height="16"><use href="#i-state"/></svg></div><div class="c" style="left:490px;width:88px"></div></div><div class="r alt"><div class="c" style="left:0px;width:200px"><svg class="ri" width="16" height="16"><use href="#i-case"/></svg><span class="it" style="letter-spacing:-0.043px">accompagnateur / accompagnat...</span></div><div class="c" style="left:200px;width:100px"><span class="tx" style="letter-spacing:-0.091px">accompagnateu...</span></div><div class="c" style="left:300px;width:150px"><span class="tx" style="letter-spacing:0.051px">Administrator User</span></div><div class="c" style="left:450px;width:40px"><svg class="si" width="16" height="16"><use href="#i-state"/></svg></div><div class="c" style="left:490px;width:88px"></div></div><div class="r"><div class="c" style="left:0px;width:200px"><svg class="ri" width="16" height="16"><use href="#i-case"/></svg><span class="it" style="letter-spacing:-0.043px">accompagnateur / accompagnat...</span></div><div class="c" style="left:200px;width:100px"><span class="tx" style="letter-spacing:-0.091px">accompagnateu...</span></div><div class="c" style="left:300px;width:150px"><span class="tx" style="letter-spacing:0.051px">Administrator User</span></div><div class="c" style="left:450px;width:40px"><svg class="si" width="16" height="16"><use href="#i-state"/></svg></div><div class="c" style="left:490px;width:88px"></div></div><div class="r alt"><div class="c" style="left:0px;width:200px"><svg class="ri" width="16" height="16"><use href="#i-case"/></svg><span class="it" style="letter-spacing:-0.043px">accompagnateur / accompagnat...</span></div><div class="c" style="left:200px;width:100px"><span class="tx" style="letter-spacing:-0.091px">accompagnateu...</span></div><div class="c" style="left:300px;width:150px"><span class="tx" style="letter-spacing:0.051px">Administrator User</span></div><div class="c" style="left:450px;width:40px"><svg class="si" width="16" height="16"><use href="#i-state"/></svg></div><div class="c" style="left:490px;width:88px"></div></div><div class="r"><div class="c" style="left:0px;width:200px"><svg class="ri" width="16" height="16"><use href="#i-case"/></svg><span class="it" style="letter-spacing:-0.043px">accompagnateur / accompagnat...</span></div><div class="c" style="left:200px;width:100px"><span class="tx" style="letter-spacing:-0.091px">accompagnateu...</span></div><div class="c" style="left:300px;width:150px"><span class="tx" style="letter-spacing:0.051px">Administrator User</span></div><div class="c" style="left:450px;width:40px"><svg class="si" width="16" height="16"><use href="#i-state"/></svg></div><div class="c" style="left:490px;width:88px"></div></div><div class="r alt"><div class="c" style="left:0px;width:200px"><svg class="ri" width="16" height="16"><use href="#i-case"/></svg><span class="it" style="letter-spacing:0.013px">acheteur / acheteuse</span></div><div class="c" style="left:200px;width:100px"><span class="tx">acheteur / ache...</span></div><div class="c" style="left:300px;width:150px"><span class="tx" style="letter-spacing:0.051px">Administrator User</span></div><div class="c" style="left:450px;width:40px"><svg class="si" width="16" height="16"><use href="#i-pub"/></svg></div><div class="c" style="left:490px;width:88px"></div></div><div class="r"><div class="c" style="left:0px;width:200px"><svg class="ri" width="16" height="16"><use href="#i-case"/></svg><span class="it" style="letter-spacing:0.080px">acheteur / acheteuse informatiq...</span></div><div class="c" style="left:200px;width:100px"><span class="tx">acheteur / ache...</span></div><div class="c" style="left:300px;width:150px"><span class="tx" style="letter-spacing:0.051px">Administrator User</span></div><div class="c" style="left:450px;width:40px"><svg class="si" width="16" height="16"><use href="#i-state"/></svg></div><div class="c" style="left:490px;width:88px"></div></div><div class="r alt"><div class="c" style="left:0px;width:200px"><svg class="ri" width="16" height="16"><use href="#i-case"/></svg><span class="it" style="letter-spacing:0.056px">acheteur industriel / acheteuse ...</span></div><div class="c" style="left:200px;width:100px"><span class="tx" style="letter-spacing:0.034px">acheteur indust...</span></div><div class="c" style="left:300px;width:150px"><span class="tx" style="letter-spacing:0.051px">Administrator User</span></div><div class="c" style="left:450px;width:40px"><svg class="si" width="16" height="16"><use href="#i-state"/></svg></div><div class="c" style="left:490px;width:88px"></div></div><div class="r"><div class="c" style="left:0px;width:200px"><svg class="ri" width="16" height="16"><use href="#i-case"/></svg><span class="it" style="letter-spacing:-0.065px">acheteur(euse) d'espaces public...</span></div><div class="c" style="left:200px;width:100px"><span class="tx" style="letter-spacing:-0.012px">acheteur(euse) ...</span></div><div class="c" style="left:300px;width:150px"><span class="tx" style="letter-spacing:0.051px">Administrator User</span></div><div class="c" style="left:450px;width:40px"><svg class="si" width="16" height="16"><use href="#i-state"/></svg></div><div class="c" style="left:490px;width:88px"></div></div><div class="r alt"><div class="c" style="left:0px;width:200px"><svg class="ri" width="16" height="16"><use href="#i-case"/></svg><span class="it" style="letter-spacing:0.020px">acousticien / acousticienne</span></div><div class="c" style="left:200px;width:100px"><span class="tx">acousticien / ac...</span></div><div class="c" style="left:300px;width:150px"><span class="tx" style="letter-spacing:0.051px">Administrator User</span></div><div class="c" style="left:450px;width:40px"><svg class="si" width="16" height="16"><use href="#i-state"/></svg></div><div class="c" style="left:490px;width:88px"></div></div><div class="r"><div class="c" style="left:0px;width:200px"><svg class="ri" width="16" height="16"><use href="#i-case"/></svg><span class="it" style="letter-spacing:0.023px">acrobate</span></div><div class="c" style="left:200px;width:100px"><span class="tx" style="letter-spacing:0.023px">acrobate</span></div><div class="c" style="left:300px;width:150px"><span class="tx" style="letter-spacing:0.051px">Administrator User</span></div><div class="c" style="left:450px;width:40px"><svg class="si" width="16" height="16"><use href="#i-state"/></svg></div><div class="c" style="left:490px;width:88px"></div></div><div class="r alt"><div class="c" style="left:0px;width:200px"><svg class="ri" width="16" height="16"><use href="#i-case"/></svg><span class="it" style="letter-spacing:0.107px">actuaire</span></div><div class="c" style="left:200px;width:100px"><span class="tx" style="letter-spacing:0.107px">actuaire</span></div><div class="c" style="left:300px;width:150px"><span class="tx" style="letter-spacing:0.051px">Administrator User</span></div><div class="c" style="left:450px;width:40px"><svg class="si" width="16" height="16"><use href="#i-state"/></svg></div><div class="c" style="left:490px;width:88px"></div></div><div class="r"><div class="c" style="left:0px;width:200px"><svg class="ri" width="16" height="16"><use href="#i-case"/></svg><span class="it" style="letter-spacing:0.107px">actuaire</span></div><div class="c" style="left:200px;width:100px"><span class="tx" style="letter-spacing:0.107px">actuaire</span></div><div class="c" style="left:300px;width:150px"><span class="tx" style="letter-spacing:0.051px">Administrator User</span></div><div class="c" style="left:450px;width:40px"><svg class="si" width="16" height="16"><use href="#i-state"/></svg></div><div class="c" style="left:490px;width:88px"></div></div><div class="r alt"><div class="c" style="left:0px;width:200px"><svg class="ri" width="16" height="16"><use href="#i-case"/></svg><span class="it" style="letter-spacing:0.122px">adjoint / adjointe de direction d'...</span></div><div class="c" style="left:200px;width:100px"><span class="tx" style="letter-spacing:0.191px">adjoint / adjoint...</span></div><div class="c" style="left:300px;width:150px"><span class="tx" style="letter-spacing:0.051px">Administrator User</span></div><div class="c" style="left:450px;width:40px"><svg class="si" width="16" height="16"><use href="#i-state"/></svg></div><div class="c" style="left:490px;width:88px"></div></div><div class="r"><div class="c" style="left:0px;width:200px"><svg class="ri" width="16" height="16"><use href="#i-case"/></svg><span class="it" style="letter-spacing:0.134px">adjoint / adjointe de sécurité</span></div><div class="c" style="left:200px;width:100px"><span class="tx" style="letter-spacing:0.191px">adjoint / adjoint...</span></div><div class="c" style="left:300px;width:150px"><span class="tx" style="letter-spacing:0.051px">Administrator User</span></div><div class="c" style="left:450px;width:40px"><svg class="si" width="16" height="16"><use href="#i-state"/></svg></div><div class="c" style="left:490px;width:88px"></div></div><div class="r alt"><div class="c" style="left:0px;width:200px"><svg class="ri" width="16" height="16"><use href="#i-case"/></svg><span class="it" style="letter-spacing:0.209px">adjoint(e) administratif(ve)</span></div><div class="c" style="left:200px;width:100px"><span class="tx" style="letter-spacing:0.115px">adjoint(e) admi...</span></div><div class="c" style="left:300px;width:150px"><span class="tx" style="letter-spacing:0.051px">Administrator User</span></div><div class="c" style="left:450px;width:40px"><svg class="si" width="16" height="16"><use href="#i-state"/></svg></div><div class="c" style="left:490px;width:88px"></div></div><div class="r selg foc"><div class="c" style="left:0px;width:200px"><svg class="ri" width="16" height="16"><use href="#i-case"/></svg><span class="it" style="letter-spacing:0.155px">administrateur / administratrice...</span></div><div class="c" style="left:200px;width:100px"><span class="tx" style="letter-spacing:0.115px">administrateur ...</span></div><div class="c" style="left:300px;width:150px"><span class="tx" style="letter-spacing:0.051px">Administrator User</span></div><div class="c" style="left:450px;width:40px"><svg class="si" width="16" height="16"><use href="#i-state"/></svg></div><div class="c" style="left:490px;width:88px"></div></div><div class="r alt"><div class="c" style="left:0px;width:200px"><svg class="ri" width="16" height="16"><use href="#i-case"/></svg><span class="it" style="letter-spacing:0.155px">administrateur / administratrice...</span></div><div class="c" style="left:200px;width:100px"><span class="tx" style="letter-spacing:0.115px">administrateur ...</span></div><div class="c" style="left:300px;width:150px"><span class="tx" style="letter-spacing:0.051px">Administrator User</span></div><div class="c" style="left:450px;width:40px"><svg class="si" width="16" height="16"><use href="#i-state"/></svg></div><div class="c" style="left:490px;width:88px"></div></div><div class="r selg"><div class="c" style="left:0px;width:200px"><svg class="ri" width="16" height="16"><use href="#i-case"/></svg><span class="it" style="letter-spacing:0.155px">administrateur / administratrice...</span></div><div class="c" style="left:200px;width:100px"><span class="tx" style="letter-spacing:0.115px">administrateur ...</span></div><div class="c" style="left:300px;width:150px"><span class="tx" style="letter-spacing:0.051px">Administrator User</span></div><div class="c" style="left:450px;width:40px"><svg class="si" width="16" height="16"><use href="#i-state"/></svg></div><div class="c" style="left:490px;width:88px"></div></div><div class="r alt"><div class="c" style="left:0px;width:200px"><svg class="ri" width="16" height="16"><use href="#i-case"/></svg><span class="it" style="letter-spacing:0.155px">administrateur / administratrice...</span></div><div class="c" style="left:200px;width:100px"><span class="tx" style="letter-spacing:0.115px">administrateur ...</span></div><div class="c" style="left:300px;width:150px"><span class="tx" style="letter-spacing:0.051px">Administrator User</span></div><div class="c" style="left:450px;width:40px"><svg class="si" width="16" height="16"><use href="#i-state"/></svg></div><div class="c" style="left:490px;width:88px"></div></div><div class="r selg"><div class="c" style="left:0px;width:200px"><svg class="ri" width="16" height="16"><use href="#i-case"/></svg><span class="it" style="letter-spacing:0.155px">administrateur / administratrice...</span></div><div class="c" style="left:200px;width:100px"><span class="tx" style="letter-spacing:0.115px">administrateur ...</span></div><div class="c" style="left:300px;width:150px"><span class="tx" style="letter-spacing:0.051px">Administrator User</span></div><div class="c" style="left:450px;width:40px"><svg class="si" width="16" height="16"><use href="#i-state"/></svg></div><div class="c" style="left:490px;width:88px"></div></div><div class="r alt"><div class="c" style="left:0px;width:200px"><svg class="ri" width="16" height="16"><use href="#i-case"/></svg><span class="it" style="letter-spacing:0.155px">administrateur / administratrice...</span></div><div class="c" style="left:200px;width:100px"><span class="tx" style="letter-spacing:0.115px">administrateur ...</span></div><div class="c" style="left:300px;width:150px"><span class="tx" style="letter-spacing:0.051px">Administrator User</span></div><div class="c" style="left:450px;width:40px"><svg class="si" width="16" height="16"><use href="#i-state"/></svg></div><div class="c" style="left:490px;width:88px"></div></div><div class="r"><div class="c" style="left:0px;width:200px"><svg class="ri" width="16" height="16"><use href="#i-case"/></svg><span class="it" style="letter-spacing:0.155px">administrateur / administratrice...</span></div><div class="c" style="left:200px;width:100px"><span class="tx" style="letter-spacing:0.115px">administrateur ...</span></div><div class="c" style="left:300px;width:150px"><span class="tx" style="letter-spacing:0.051px">Administrator User</span></div><div class="c" style="left:450px;width:40px"><svg class="si" width="16" height="16"><use href="#i-state"/></svg></div><div class="c" style="left:490px;width:88px"></div></div><div class="r alt"><div class="c" style="left:0px;width:200px"><svg class="ri" width="16" height="16"><use href="#i-case"/></svg><span class="it" style="letter-spacing:0.155px">administrateur / administratrice...</span></div><div class="c" style="left:200px;width:100px"><span class="tx" style="letter-spacing:0.115px">administrateur ...</span></div><div class="c" style="left:300px;width:150px"><span class="tx" style="letter-spacing:0.051px">Administrator User</span></div><div class="c" style="left:450px;width:40px"><svg class="si" width="16" height="16"><use href="#i-state"/></svg></div><div class="c" style="left:490px;width:88px"></div></div><div class="r"><div class="c" style="left:0px;width:200px"><svg class="ri" width="16" height="16"><use href="#i-case"/></svg><span class="it" style="letter-spacing:0.155px">administrateur / administratrice...</span></div><div class="c" style="left:200px;width:100px"><span class="tx" style="letter-spacing:0.115px">administrateur ...</span></div><div class="c" style="left:300px;width:150px"><span class="tx" style="letter-spacing:0.051px">Administrator User</span></div><div class="c" style="left:450px;width:40px"><svg class="si" width="16" height="16"><use href="#i-state"/></svg></div><div class="c" style="left:490px;width:88px"></div></div><div class="r alt"><div class="c" style="left:0px;width:200px"><svg class="ri" width="16" height="16"><use href="#i-case"/></svg><span class="it" style="letter-spacing:0.155px">administrateur / administratrice...</span></div><div class="c" style="left:200px;width:100px"><span class="tx" style="letter-spacing:0.115px">administrateur ...</span></div><div class="c" style="left:300px;width:150px"><span class="tx" style="letter-spacing:0.051px">Administrator User</span></div><div class="c" style="left:450px;width:40px"><svg class="si" width="16" height="16"><use href="#i-state"/></svg></div><div class="c" style="left:490px;width:88px"></div></div><div class="r"><div class="c" style="left:0px;width:200px"><svg class="ri" width="16" height="16"><use href="#i-case"/></svg><span class="it" style="letter-spacing:0.155px">administrateur / administratrice...</span></div><div class="c" style="left:200px;width:100px"><span class="tx" style="letter-spacing:0.115px">administrateur ...</span></div><div class="c" style="left:300px;width:150px"><span class="tx" style="letter-spacing:0.051px">Administrator User</span></div><div class="c" style="left:450px;width:40px"><svg class="si" width="16" height="16"><use href="#i-state"/></svg></div><div class="c" style="left:490px;width:88px"></div></div><div class="r alt"><div class="c" style="left:0px;width:200px"><svg class="ri" width="16" height="16"><use href="#i-case"/></svg><span class="it" style="letter-spacing:0.155px">administrateur / administratrice...</span></div><div class="c" style="left:200px;width:100px"><span class="tx" style="letter-spacing:0.115px">administrateur ...</span></div><div class="c" style="left:300px;width:150px"><span class="tx" style="letter-spacing:0.051px">Administrator User</span></div><div class="c" style="left:450px;width:40px"><svg class="si" width="16" height="16"><use href="#i-state"/></svg></div><div class="c" style="left:490px;width:88px"></div></div></div><div class="vsb" style="left:577px;width:18px"><i class="up"></i><i class="dn"></i><b style="top:17px;height:398px"></b></div><div class="hsb" style="width:577px"><i class="lt"></i><i class="rt"></i><b style="left:17px;width:166px"></b></div><div class="corner" style="left:577px;width:18px"></div><div class="pg"><span class="btn dis" style="left:2px"><svg width="16" height="16"><use href="#p-first"/></svg></span><span class="btn dis" style="left:26px"><svg width="16" height="16"><use href="#p-prev"/></svg></span><i class="sep" style="left:49px"></i><span class="pt" style="left:57px;letter-spacing:-0.426px">Page</span><span class="inp" style="left:89px">1</span><span class="pt" style="left:127px;letter-spacing:-0.096px">sur 32</span><i class="sep" style="left:163px"></i><span class="btn" style="left:168px"><svg width="16" height="16"><use href="#p-next"/></svg></span><span class="btn" style="left:191px"><svg width="16" height="16"><use href="#p-last"/></svg></span><i class="sep" style="left:215px"></i><span class="btn" style="left:219px"><svg width="16" height="16"><use href="#p-refresh"/></svg></span><span class="info" style="letter-spacing:-0.089px">Contenus 1 - 50 sur 1585</span></div></div>
</body></html>
